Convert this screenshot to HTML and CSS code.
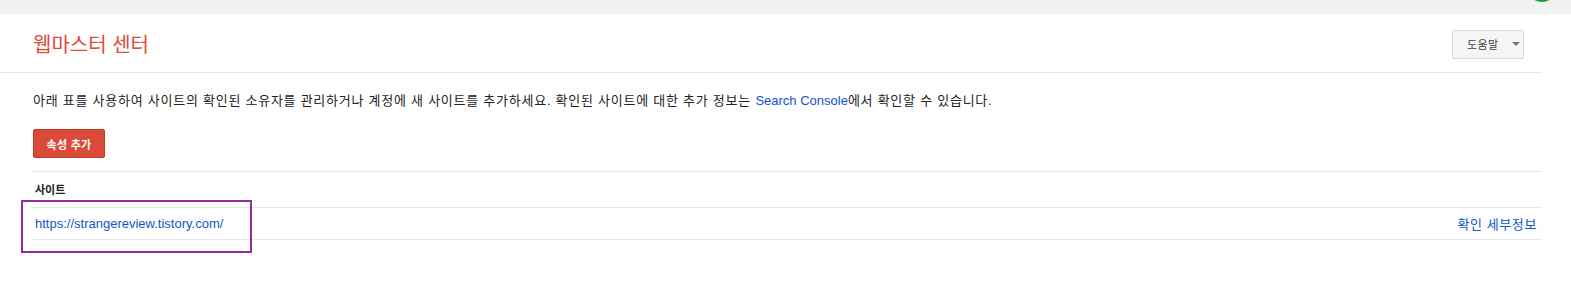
FILE: index.html
```html
<!DOCTYPE html>
<html lang="ko">
<head>
    <meta charset="UTF-8">
    <title>웹마스터 센터</title>
    <link rel="stylesheet" href="styles.css">
</head>
<body>
    <div class="top-bar">
        <span class="status-ring"></span>
    </div>

    <header class="page-header">
        <h1 class="page-title">웹마스터 센터</h1>
        <button class="help-btn">도움말<span class="help-arrow"></span></button>
    </header>

    <main class="content">
        <p class="intro">아래 표를 사용하여 사이트의 확인된 소유자를 관리하거나 계정에 새 사이트를 추가하세요. 확인된 사이트에 대한 추가 정보는 <a href="#" class="link latin">Search Console</a>에서 확인할 수 있습니다.</p>

        <button class="add-btn">속성 추가</button>

        <div class="site-table">
            <div class="site-head">사이트</div>
            <div class="site-row">
                <a href="#" class="link site-url">https://strangereview.tistory.com/</a>
                <a href="#" class="link details-link">확인 세부정보</a>
            </div>
        </div>

        <div class="highlight-box"></div>
    </main>
</body>
</html>
```

FILE: styles.css
```css
:root {
    --accent-red: #dd4b39;
    --link-blue: #1155cc;
    --line-color: #e5e5e5;
    --text-color: #222222;
}

* {
    margin: 0;
    padding: 0;
    box-sizing: border-box;
}

body {
    font-family: "Liberation Sans", "Noto Sans CJK KR", Arial, sans-serif;
    color: var(--text-color);
    background-color: #ffffff;
    width: 1571px;
    height: 289px;
    overflow: hidden;
    position: relative;
}

.top-bar {
    height: 14px;
    background-color: #f1f1f1;
    position: relative;
    overflow: hidden;
}

.status-ring {
    position: absolute;
    left: 1527px;
    top: -28px;
    width: 30px;
    height: 30px;
    border: 2px solid #1e9e3e;
    border-radius: 50%;
}

.page-header {
    display: flex;
    align-items: center;
    justify-content: space-between;
    height: 59px;
    padding: 0 18px 0 33px;
    margin-right: 29px;
    border-bottom: 1px solid var(--line-color);
}

.page-title {
    font-size: 20px;
    font-weight: 400;
    color: var(--accent-red);
    margin-top: 1px;
}

.help-btn {
    display: flex;
    align-items: center;
    width: 72px;
    height: 29px;
    padding: 0 0 0 14px;
    background-color: #f5f5f5;
    border: 1px solid #dcdcdc;
    border-radius: 2px;
    font-family: inherit;
    font-size: 11px;
    color: #444444;
    letter-spacing: 0.4px;
    margin-top: 2px;
}

.help-arrow {
    margin-left: 13px;
    width: 0;
    height: 0;
    border-left: 4px solid transparent;
    border-right: 4px solid transparent;
    border-top: 4px solid #777777;
}

.content {
    padding-left: 33px;
    margin-right: 29px;
}

.intro {
    margin-top: 19px;
    font-size: 13px;
    line-height: 18px;
    letter-spacing: 0.75px;
}

.link {
    color: var(--link-blue);
    text-decoration: none;
}

.latin {
    letter-spacing: 0;
}

.add-btn {
    display: block;
    margin-top: 19px;
    width: 72px;
    height: 29px;
    background-color: #d94a38;
    border: 1px solid #c53727;
    border-radius: 2px;
    color: #ffffff;
    font-family: inherit;
    font-size: 11px;
    font-weight: 700;
    letter-spacing: 0.3px;
}

.site-table {
    margin-top: 13px;
    border-top: 1px solid var(--line-color);
}

.site-head {
    height: 36px;
    padding: 9px 2px 0;
    font-size: 11px;
    font-weight: 700;
    border-bottom: 1px solid var(--line-color);
}

.site-row {
    display: flex;
    align-items: center;
    justify-content: space-between;
    height: 32px;
    padding: 0 5px 0 2px;
    font-size: 13px;
    border-bottom: 1px solid var(--line-color);
}

.details-link {
    letter-spacing: 0.6px;
}

.highlight-box {
    position: absolute;
    left: 21px;
    top: 200px;
    width: 231px;
    height: 53px;
    border: 2px solid #962a9e;
}
```
